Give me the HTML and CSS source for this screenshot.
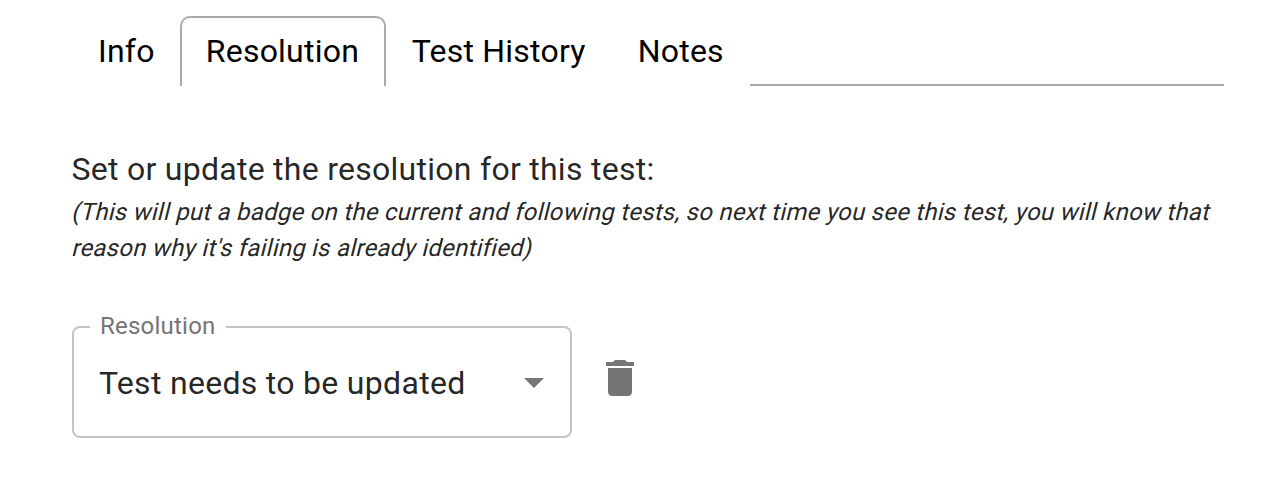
FILE: index.html
```html
<!DOCTYPE html>
<html lang="en">
<head>
<meta charset="utf-8">
<title>Resolution</title>
<link rel="stylesheet" href="styles.css">
</head>
<body>
<nav class="tabs">
  <a class="tab">Info</a>
  <a class="tab active">Resolution</a>
  <a class="tab">Test History</a>
  <a class="tab">Notes</a>
  <span class="tab-line"></span>
</nav>
<main class="content">
  <h1 class="title">Set or update the resolution for this test:</h1>
  <p class="hint"><span class="slanted">(This will put a badge on the current and following tests, so next time you see this test, you will know that</span> <span class="slanted">reason why it's failing is already identified)</span></p>
  <div class="controls">
    <fieldset class="select">
      <legend class="label">Resolution</legend>
      <div class="value"><span>Test needs to be updated</span>
        <svg class="arrow" width="20" height="10" viewBox="0 0 20 10"><path d="M0 0h20L10 10z"/></svg>
      </div>
    </fieldset>
    <svg class="trash" width="48" height="48" viewBox="0 0 24 24"><path d="M6 19c0 1.1.9 2 2 2h8c1.1 0 2-.9 2-2V7H6v12zM19 4h-3.500l-1-1h-5l-1 1H5v2h14V4z"/></svg>
  </div>
</main>
</body>
</html>
```
FILE: styles.css
```css
* { box-sizing: border-box; }
body { margin: 0; height: 494px; background: #fff; color: rgba(0,0,0,.87); font-family: Roboto, sans-serif; overflow: hidden; }
.tabs { display: flex; width: 1152px; height: 86px; margin-left: 72px; padding-top: 16px; color: #000; font-size: 32px; letter-spacing: .23px; line-height: 38px; }
.tab { padding: 16px 26px 0; white-space: nowrap; }
.tab:first-child { margin-right: -.7px; }
.active { border: 2px solid #aaa; border-bottom: 0; border-radius: 10px 10px 0 0; padding: 14px 24.600px 0 23.750px; }
.tab-line { flex: 1; border-bottom: 2px solid #aaa; }
.content { padding: 59px 0 0 71.500px; }
.title { margin: 0; font-size: 32px; font-weight: 400; line-height: 48px; letter-spacing: .27px; }
.hint { margin: 0 0 0 -1px; padding-top: 1px; font-size: 24px; line-height: 36px; letter-spacing: .225px; white-space: nowrap; }
.slanted { display: block; width: max-content; transform: skewX(-14deg); transform-origin: 0 26px; }
.controls { display: flex; margin: 47px 0 0 .5px; }
.select { width: 500px; height: 125px; margin: 0; padding: 0 26px; border: 2px solid #c4c4c4; border-radius: 8px; }
.label { margin-left: -10px; padding: 0 10px 2px; color: #757575; font-size: 24px; line-height: 26px; letter-spacing: .23px; }
.value { display: flex; align-items: center; justify-content: space-between; height: 84px; margin-left: -1px; font-size: 32px; letter-spacing: .3px; white-space: nowrap; }
.arrow, .trash { fill: #757575; }
.trash { margin: 41px 0 0 24px; }
```
